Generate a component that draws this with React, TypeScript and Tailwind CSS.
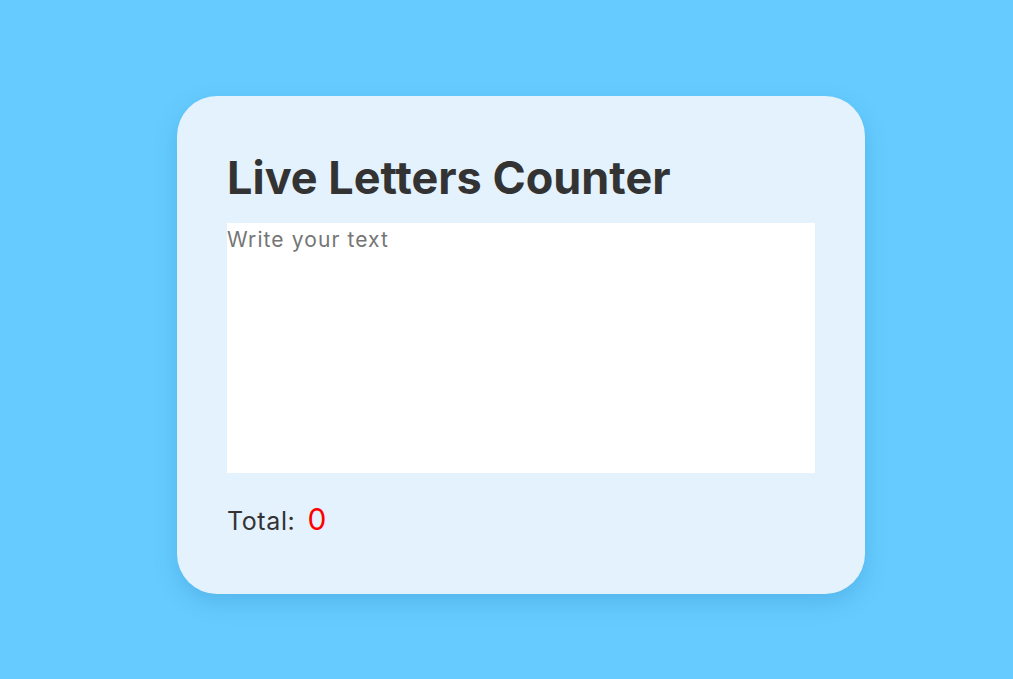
import { useState } from 'react';

const App = () => {
  const [text, setText] = useState('');

  return (
    <div className="min-h-screen w-full bg-[#66ccff] pt-[96px] pl-[177px] font-['Inter','Noto_Sans',sans-serif]">
      <div className="w-[688px] h-[498px] rounded-[40px] bg-[#e3f2fd] p-[50px] shadow-[0_8px_24px_rgba(0,80,140,0.18)]">
        <h1 className="text-[45px] leading-[67px] font-bold text-[#333333] tracking-[0px] mb-[10px] -mt-[2px] pb-[2px]">
          Live Letters Counter
        </h1>
        <textarea
          value={text}
          onChange={(e) => setText(e.target.value)}
          placeholder="Write your text"
          className="block w-full h-[250px] bg-white p-0 text-[21px] leading-[34px] tracking-[1.1px] text-[#333] placeholder:text-[#757575] outline-none resize-none border-0"
        />
        <div className="mt-[24px] flex items-baseline text-[#333333]">
          <span className="text-[25px] tracking-[0.6px]">Total:</span>
          <span className="ml-[12px] text-[30px] text-[#ff0000]">{text.length}</span>
        </div>
      </div>
    </div>
  );
};

export default App;
